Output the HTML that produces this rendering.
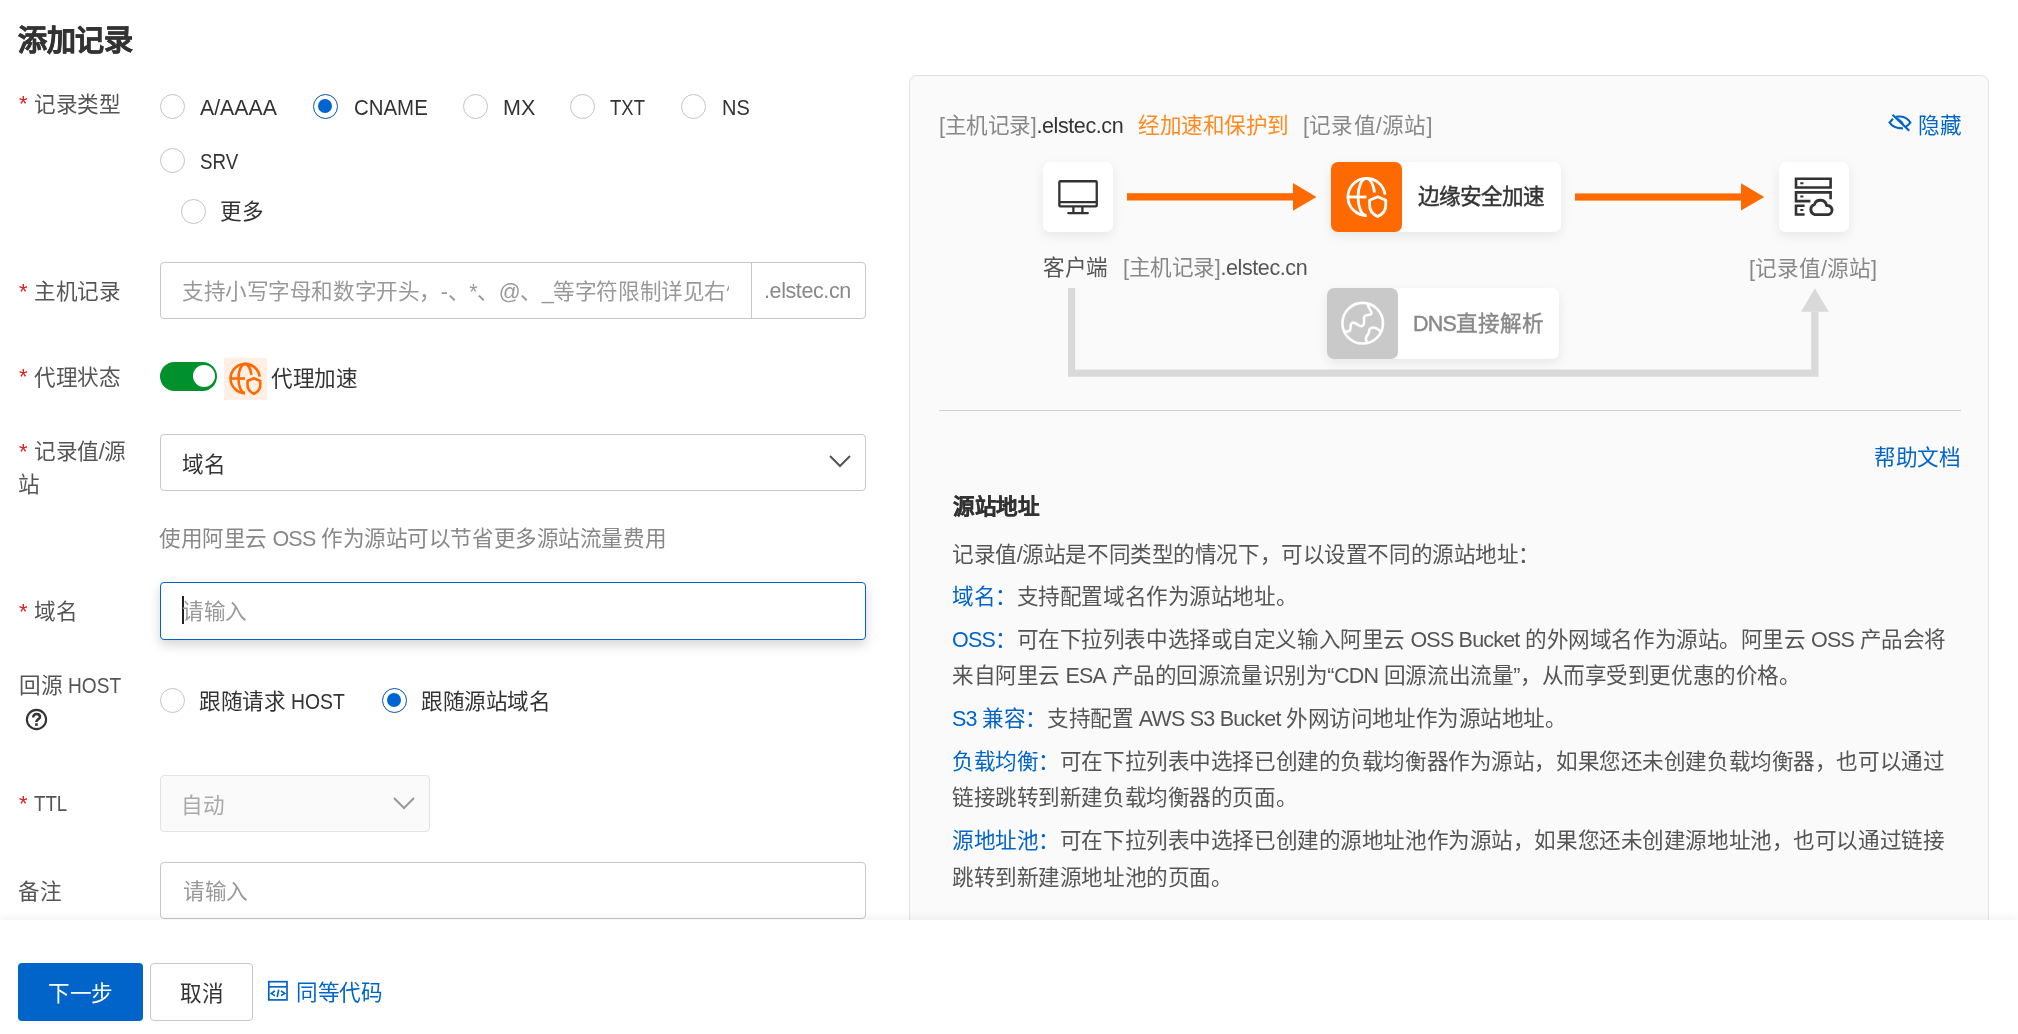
<!DOCTYPE html>
<html lang="zh-CN">
<head>
<meta charset="utf-8">
<style>
*{box-sizing:border-box;margin:0;padding:0}
html,body{width:2018px;height:1034px;overflow:hidden;background:#fff}
.a,.req{will-change:transform}
body{position:relative;font-family:"Liberation Sans",sans-serif;font-size:21.6px;letter-spacing:-0.43px;color:#333}
.a{position:absolute;white-space:nowrap;line-height:40px;margin-top:-1px}
.a0{margin-top:0}
.lbl{color:#555}
.req{position:absolute;color:#e0201b;font-size:22px;line-height:40px}
.radio{position:absolute;width:25px;height:25px;border:1px solid #c4c4c4;border-radius:50%;background:#fff}
.radio.on{border:1.6px solid #0a52a8}
.radio.on::after{content:"";position:absolute;left:3.9px;top:3.9px;width:14px;height:14px;border-radius:50%;background:#0064d2}
.inp{position:absolute;border:1px solid #c8c8c8;border-radius:4px;background:#fff}
.ph{color:#999}
.lat{font-size:21.5px;letter-spacing:-0.8px}
.sx{display:inline-block;letter-spacing:0;transform-origin:0 50%}
.blue{color:#0064c8}
svg{position:absolute;overflow:visible}
.box{position:absolute;background:#fff;border-radius:7px;box-shadow:0 4px 12px rgba(0,0,0,.08)}
</style>
</head>
<body>
<!-- title -->
<div class="a" style="left:18px;top:22px;font-size:29px;font-weight:bold;-webkit-text-stroke:0.6px #333;color:#333">添加记录</div>

<!-- row: record type -->
<div class="req" style="left:19px;top:84px">*</div>
<div class="a lbl" style="left:34px;top:86px">记录类型</div>
<div class="radio" style="left:160px;top:94px"></div>
<div class="a a0" style="left:200px;top:88px"><span class="lat sx" style="transform:scaleX(.99)">A/AAAA</span></div>
<div class="radio on" style="left:313px;top:94px"></div>
<div class="a a0" style="left:354px;top:88px"><span class="lat sx" style="transform:scaleX(.95)">CNAME</span></div>
<div class="radio" style="left:463px;top:94px"></div>
<div class="a a0" style="left:503px;top:88px"><span class="lat sx" style="transform:scaleX(1)">MX</span></div>
<div class="radio" style="left:570px;top:94px"></div>
<div class="a a0" style="left:610px;top:88px"><span class="lat sx" style="transform:scaleX(.86)">TXT</span></div>
<div class="radio" style="left:681px;top:94px"></div>
<div class="a a0" style="left:722px;top:88px"><span class="lat sx" style="transform:scaleX(.93)">NS</span></div>
<div class="radio" style="left:160px;top:148px"></div>
<div class="a a0" style="left:200px;top:141.5px"><span class="lat sx" style="transform:scaleX(.87)">SRV</span></div>
<div class="radio" style="left:181px;top:199px"></div>
<div class="a" style="left:220px;top:193px">更多</div>

<!-- host record -->
<div class="req" style="left:19px;top:272px">*</div>
<div class="a lbl" style="left:34px;top:273px">主机记录</div>
<div class="inp" style="left:160px;top:262px;width:706px;height:57px"></div>
<div style="position:absolute;left:751px;top:263px;width:1px;height:55px;background:#c8c8c8"></div>
<div class="a ph" style="left:182px;top:273px;width:547px;overflow:hidden">支持小写字母和数字开头，-、*、@、_等字符限制详见右侧</div>
<div class="a" style="left:764px;top:272px;color:#888"><span class="lat" style="letter-spacing:-0.4px">.elstec.cn</span></div>

<!-- proxy -->
<div class="req" style="left:19px;top:357px">*</div>
<div class="a lbl" style="left:34px;top:359px">代理状态</div>
<div style="position:absolute;left:160px;top:362px;width:57px;height:29px;border-radius:15px;background:#00912d"></div>
<div style="position:absolute;left:192.5px;top:365px;width:22px;height:22px;border-radius:50%;background:#fff"></div>
<div style="position:absolute;left:224px;top:358px;width:43px;height:42px;background:#ffefe4"></div>
<svg style="left:229px;top:362px" width="33" height="33" viewBox="0 0 42 42"><use href="#gshield" stroke="#ff6a00" stroke-width="3.3"/></svg>
<div class="a a0" style="left:271px;top:359px;color:#333">代理加速</div>

<!-- record value -->
<div class="req" style="left:19px;top:432px">*</div>
<div class="a lbl" style="left:34px;top:433px">记录值/源</div>
<div class="a lbl" style="left:18px;top:466px">站</div>
<div class="inp" style="left:160px;top:434px;width:706px;height:57px"></div>
<div class="a" style="left:182px;top:446px">域名</div>
<svg style="left:829px;top:455px" width="22" height="13" viewBox="0 0 22 13"><path d="M1 1 L11 11 L21 1" fill="none" stroke="#555" stroke-width="2"/></svg>
<div class="a" style="left:159px;top:520px;color:#888">使用阿里云 <span class="lat">OSS</span> 作为源站可以节省更多源站流量费用</div>

<!-- domain -->
<div class="req" style="left:19px;top:592px">*</div>
<div class="a lbl" style="left:34px;top:593px">域名</div>
<div class="inp" style="left:160px;top:582px;width:706px;height:58px;border-color:#0064c8;box-shadow:0 5px 12px rgba(0,0,0,.17)"></div>
<div style="position:absolute;left:182px;top:596px;width:2px;height:28px;background:#222"></div>
<div class="a ph" style="left:182px;top:593px">请输入</div>

<!-- origin host -->
<div class="a lbl" style="left:19px;top:667px">回源 <span class="lat sx" style="transform:scaleX(.89)">HOST</span></div>
<svg style="left:25px;top:709px" width="22" height="22" viewBox="0 0 22 22"><circle cx="11.5" cy="10.5" r="9.6" fill="none" stroke="#333" stroke-width="2.1"/><path d="M8.2 8.4 C8.2 6.1 9.7 4.9 11.6 4.9 C13.6 4.9 15 6.1 15 7.9 C15 10.1 11.4 10.6 11.4 13" fill="none" stroke="#333" stroke-width="2.5"/><rect x="10.1" y="14.3" width="2.7" height="2.5" fill="#333"/></svg>
<div class="radio" style="left:160px;top:688px"></div>
<div class="a" style="left:199px;top:683px">跟随请求 <span class="lat sx" style="transform:scaleX(.9)">HOST</span></div>
<div class="radio on" style="left:382px;top:688px"></div>
<div class="a" style="left:421px;top:683px">跟随源站域名</div>

<!-- TTL -->
<div class="req" style="left:19px;top:784px">*</div>
<div class="a a0 lbl" style="left:34px;top:784px"><span class="lat sx" style="transform:scaleX(.87)">TTL</span></div>
<div class="inp" style="left:160px;top:775px;width:270px;height:57px;background:#fafafa;border-color:#e3e3e3"></div>
<div class="a" style="left:181px;top:787px;color:#aaa">自动</div>
<svg style="left:393px;top:797px" width="22" height="13" viewBox="0 0 22 13"><path d="M1 1 L11 11 L21 1" fill="none" stroke="#999" stroke-width="2"/></svg>

<!-- remark -->
<div class="a lbl" style="left:18px;top:873px">备注</div>
<div class="inp" style="left:160px;top:862px;width:706px;height:57px"></div>
<div class="a ph" style="left:183px;top:873px">请输入</div>

<!-- RIGHT CARD -->
<div style="position:absolute;left:909px;top:75px;width:1080px;height:1000px;border:1px solid #e3e3e3;border-radius:8px;background:#fafafa"></div>
<div class="a a0" style="left:939px;top:106px"><span style="color:#888">[主机记录]</span><span class="lat" style="letter-spacing:-0.4px">.elstec.cn</span></div>
<div class="a a0" style="left:1138px;top:106px;color:#ff8a20">经加速和保护到</div>
<div class="a a0" style="left:1303px;top:106px;color:#888;letter-spacing:0.2px">[记录值/源站]</div>
<svg style="left:1884px;top:108px" width="32" height="32" viewBox="0 0 32 32"><g fill="none" stroke="#0064c8" stroke-width="2.1"><path d="M9 10.7 L5.5 14.5 C8 18.4 12 20.5 18.9 20.4"/><path d="M12 8.8 C13.4 8.5 14.8 8.4 16.4 8.5 C20.4 8.7 24 10.9 26.4 14.5 C25.2 16.3 23.6 17.7 21.7 18.6"/><path d="M13.6 10.7 L16.7 13.2 C17.6 13.9 18.3 14.9 18.9 16.1"/><path d="M9.3 7.4 L24.5 22.1" stroke-linecap="square"/></g></svg>
<div class="a a0 blue" style="left:1918px;top:106px">隐藏</div>

<!-- diagram -->
<div class="box" style="left:1043px;top:161.5px;width:70px;height:70px"></div>
<svg style="left:1048px;top:167px" width="60" height="60" viewBox="0 0 60 60"><g fill="none" stroke="#333" stroke-width="2.3"><rect x="11.35" y="14.25" width="37.4" height="25.2" rx="1"/><path d="M11.35 35.2 H48.75 M25.4 40 V45.5 M34.4 40 V45.5"/><path d="M20.3 46.1 H39.8" stroke-linecap="round"/></g></svg>
<svg style="left:0;top:0" width="2018" height="420" viewBox="0 0 2018 420"><g fill="#ff6a00"><rect x="1127" y="193.2" width="167" height="7.3"/><path d="M1293 183 L1316.5 196.9 L1293 210.7 Z"/><rect x="1575" y="193.4" width="167" height="7.2"/><path d="M1741 183.3 L1764.3 196.9 L1741 210.4 Z"/></g>
<g fill="#d9d9d9"><path d="M1068 288 H1075.2 V369.6 H1811.3 V311.5 H1818.5 V376.8 H1068 Z"/><path d="M1801 311.8 L1814.9 288.3 L1828.7 311.8 Z"/></g></svg>
<div class="box" style="left:1331px;top:161.5px;width:230px;height:70px"></div>
<div style="position:absolute;left:1331px;top:161.5px;width:70.5px;height:70px;border-radius:7px;background:#ff6a00"></div>
<svg style="left:1345.5px;top:176px" width="42" height="42" viewBox="0 0 42 42"><use href="#gshield" stroke="#fff" stroke-width="2.8"/></svg>
<div class="a a0" style="left:1418px;top:177px;font-size:21.6px;letter-spacing:-1.1px;-webkit-text-stroke:0.45px #333;color:#333">边缘安全加速</div>
<div class="box" style="left:1779px;top:162px;width:70px;height:70px"></div>
<svg style="left:1784px;top:167px" width="60" height="60" viewBox="0 0 60 60"><g fill="none" stroke="#333" stroke-width="2.6"><path d="M12 11.7 H46.6 V20.5 H12 Z"/><path d="M46.6 32.2 V25.4 H12 V34.1 H26.4"/><path d="M20.6 38.7 H12 V47.5 H20.6"/><path d="M16.3 16.2 H19.4 M16.3 29.6 H19.4 M16.3 42.9 H19.4" stroke-width="2"/><path d="M30.8 47.6 A5.2 5.2 0 0 1 30.4 37.6 A6.3 6.3 0 0 1 42.6 38.6 A4.5 4.5 0 0 1 44.3 47.6 Z" stroke-linejoin="round" stroke-width="2.9"/></g></svg>
<div class="a a0" style="left:1043px;top:248px;color:#555">客户端</div>
<div class="a a0" style="left:1123px;top:248px"><span style="color:#888">[主机记录]</span><span class="lat" style="color:#555;letter-spacing:-0.4px">.elstec.cn</span></div>
<div class="a a0" style="left:1749px;top:249px;color:#888;letter-spacing:0px">[记录值/源站]</div>
<div class="box" style="left:1327px;top:288px;width:232px;height:70.5px"></div>
<div style="position:absolute;left:1327px;top:288px;width:71px;height:70.5px;border-radius:7px;background:#c9c9c9"></div>
<svg style="left:1333px;top:293px" width="60" height="60" viewBox="0 0 60 60"><g fill="none" stroke="#fff" stroke-width="2.6" stroke-linejoin="round"><circle cx="29.7" cy="30.2" r="20.3"/><path d="M34.8 10.4 C34.8 12.5 34.9 14 37.1 16.8 C38.8 18.8 38.9 21 37.2 21.6 C35.5 22.1 33.5 22.2 32.2 22.9 C30.8 23.8 30.8 25.5 31 27 C31.3 30 31 32.2 29.1 33 C27.4 33.6 25.8 32.3 24.4 31.4 C22.4 30.1 20.7 28.8 19 30 C17.3 31.1 17.6 33.8 17.4 36 C17.2 37.6 16 38.5 14 38.6 C12.6 38.6 11.5 38 10.7 37.7"/><path d="M47.6 38.6 C46.3 37.3 44.9 35.9 43.5 35.4 C41.6 34.6 40 34.1 38.3 34.9 C36.8 35.6 36.1 36.8 36 38.3 C35.9 39.6 36 40.2 35 41.5 C34 42.7 33.2 43.6 32.9 45.2 C32.7 46.8 33.4 48.3 34.2 49.3"/></g></svg>
<div class="a a0" style="left:1413px;top:304px;font-size:21.6px;letter-spacing:-0.1px;-webkit-text-stroke:0.4px #888;color:#888"><span class="lat">DNS</span>直接解析</div>
<div style="position:absolute;left:939px;top:410px;width:1022px;height:1px;background:#cfcfcf"></div>

<!-- help -->
<div class="a blue" style="left:1874px;top:439px">帮助文档</div>
<div class="a" style="left:953px;top:488px;font-weight:bold;-webkit-text-stroke:0.3px #333;color:#333">源站地址</div>
<div class="a lbl" style="left:952px;top:536px">记录值/源站是不同类型的情况下，可以设置不同的源站地址：</div>
<div class="a lbl" style="left:952px;top:578px"><span class="blue">域名：</span>支持配置域名作为源站地址。</div>
<div class="a lbl" style="left:952px;top:620.5px"><span class="blue lat">OSS</span><span class="blue">：</span>可在下拉列表中选择或自定义输入阿里云 <span class="lat">OSS Bucket</span> 的外网域名作为源站。阿里云 <span class="lat">OSS</span> 产品会将</div>
<div class="a lbl" style="left:952px;top:656.5px">来自阿里云 <span class="lat">ESA</span> 产品的回源流量识别为“<span class="lat">CDN</span> 回源流出流量”，从而享受到更优惠的价格。</div>
<div class="a lbl" style="left:952px;top:699.5px"><span class="blue"><span class="lat">S3</span> 兼容：</span>支持配置 <span class="lat">AWS S3 Bucket</span> 外网访问地址作为源站地址。</div>
<div class="a lbl" style="left:952px;top:742.5px"><span class="blue">负载均衡：</span>可在下拉列表中选择已创建的负载均衡器作为源站，如果您还未创建负载均衡器，也可以通过</div>
<div class="a lbl" style="left:952px;top:778.5px">链接跳转到新建负载均衡器的页面。</div>
<div class="a lbl" style="left:952px;top:821.5px"><span class="blue">源地址池：</span>可在下拉列表中选择已创建的源地址池作为源站，如果您还未创建源地址池，也可以通过链接</div>
<div class="a lbl" style="left:952px;top:858.5px">跳转到新建源地址池的页面。</div>

<!-- footer -->
<div style="position:absolute;left:0;top:920px;width:2018px;height:114px;background:#fff;box-shadow:0 -3px 8px rgba(0,0,0,.05)"></div>
<div style="position:absolute;left:18px;top:963px;width:125px;height:58px;border-radius:4px;background:#0064c8"></div>
<div class="a a0" style="left:48px;top:974px;color:#fff">下一步</div>
<div style="position:absolute;left:150px;top:963px;width:103px;height:58px;border-radius:4px;border:1px solid #c8c8c8;background:#fff"></div>
<div class="a a0" style="left:180px;top:974px;color:#333">取消</div>
<svg style="left:262px;top:975px" width="32" height="32" viewBox="0 0 32 32"><g fill="none" stroke="#0064c8" stroke-width="1.7"><rect x="6.8" y="6.7" width="18.2" height="18.2"/><path d="M6.8 11.8 H25"/><path d="M12.4 16.2 L9.3 18.4 L12.4 20.4 M19.5 16.2 L22.7 18.4 L19.5 20.4 M16.6 15.3 L15.3 21.5" stroke-linecap="round"/></g></svg>
<div class="a a0 blue" style="left:296px;top:973px">同等代码</div>

<svg width="0" height="0" style="position:absolute">
<defs>
<g id="gshield" fill="none">
<path d="M20.4 39.6 A18.6 18.6 0 1 1 39 18.6"/>
<path d="M20.4 2.4 A8.4 18.6 0 0 0 20.4 39.6"/>
<path d="M20.4 2.4 A8.4 18.6 0 0 1 28.5 16.5"/>
<path d="M1.8 21 H20.4"/>
<path d="M31.7 20.7 L23.6 24.2 V29 C23.6 35 27 38.5 31.7 40.5 C36.4 38.5 39.8 35 39.8 29 V24.2 Z" stroke-linejoin="round"/>
</g>
</defs>
</svg>
</body>
</html>
